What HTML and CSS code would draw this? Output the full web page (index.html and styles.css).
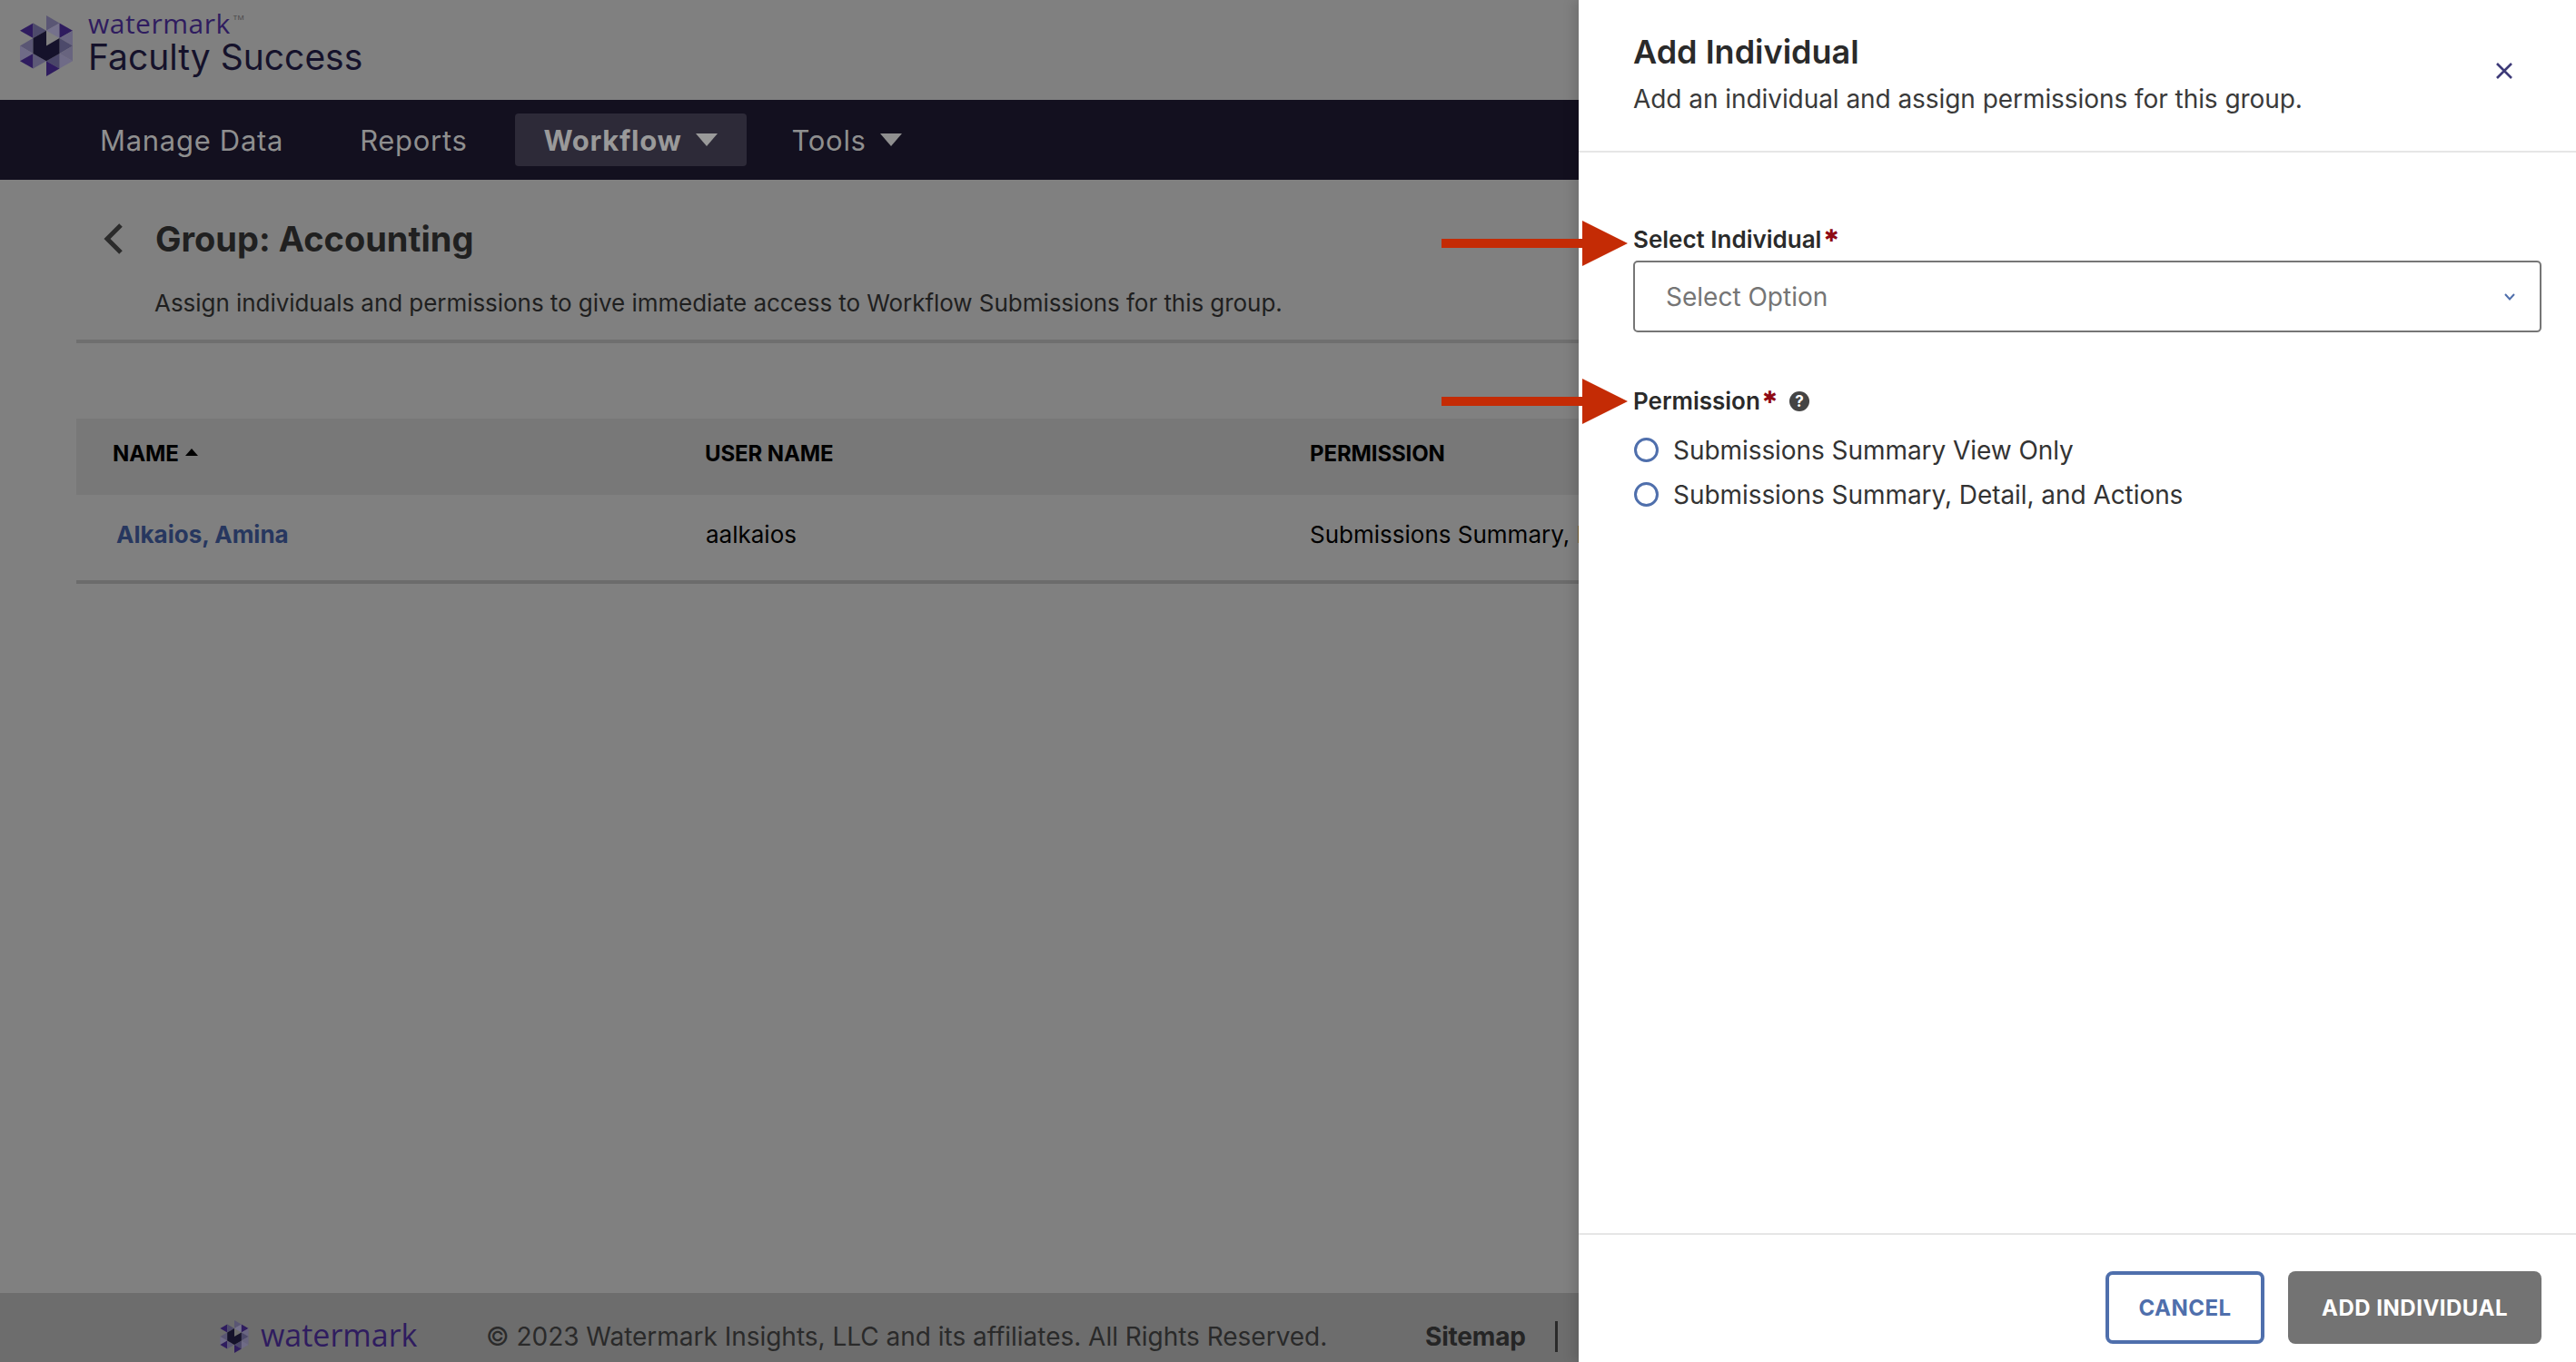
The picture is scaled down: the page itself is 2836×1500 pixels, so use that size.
FILE: index.html
```html
<!DOCTYPE html>
<html lang="en">
<head>
<meta charset="utf-8">
<title>Group: Accounting</title>
<link rel="stylesheet" href="styles.css">
</head>
<body>
<svg class="defs" width="0" height="0" aria-hidden="true">
  <symbol id="wm" viewBox="0 0 58 67">
    <polygon fill="#5a5674" points="29,0 43.5,8.4 29,16.75"/>
    <polygon fill="#75718c" points="29,16.75 43.5,8.4 43.5,25.1"/>
    <polygon fill="#2f1c5f" points="43.5,8.4 58,16.75 43.5,25.1"/>
    <polygon fill="#6a6682" points="58,16.75 43.5,25.1 58,33.5"/>
    <polygon fill="#4d4a6b" points="43.5,25.1 58,33.5 43.5,41.9"/>
    <polygon fill="#68647f" points="58,33.5 43.5,41.9 58,50.25"/>
    <polygon fill="#6f6b87" points="43.5,41.9 58,50.25 43.5,58.6"/>
    <polygon fill="#4a4668" points="29,50.25 43.5,41.9 43.5,58.6"/>
    <polygon fill="#2f1c5f" points="29,50.25 43.5,58.6 29,67"/>
    <polygon fill="#2f1c5f" points="0,16.75 14.5,8.4 14.5,25.1"/>
    <polygon fill="#4d4a6b" points="14.5,8.4 29,16.75 14.5,25.1"/>
    <polygon fill="#5a5674" points="0,33.5 14.5,25.1 14.5,41.9"/>
    <polygon fill="#6f6b87" points="0,33.5 14.5,41.9 0,50.25"/>
    <polygon fill="#2f1c5f" points="0,50.25 14.5,41.9 14.5,58.6"/>
    <polygon fill="#5d5977" points="14.5,41.9 29,50.25 14.5,58.6"/>
    <polygon fill="#15122b" points="14.5,25.1 29,16.75 29,33.5 43.5,25.1 43.5,41.9 29,50.25 14.5,41.9"/>
  </symbol>
</svg>

<div class="page">
  <header class="brand">
    <svg class="brand-mark"><use href="#wm"/></svg>
    <div class="brand-text">
      <div class="brand-wm">watermark<span class="tm">TM</span></div>
      <div class="brand-product">Faculty Success</div>
    </div>
  </header>

  <nav class="nav">
    <a class="nav-item">Manage Data</a>
    <a class="nav-item">Reports</a>
    <a class="nav-item active">Workflow<i class="caret"></i></a>
    <a class="nav-item">Tools<i class="caret"></i></a>
  </nav>

  <main class="main">
    <section class="title-block">
      <div class="title-row">
        <svg class="back" viewBox="0 0 22 34"><path d="M19 2 4 17l15 15" fill="none" stroke="#2b2b2b" stroke-width="5"/></svg>
        <h1>Group: Accounting</h1>
      </div>
      <p class="lead">Assign individuals and permissions to give immediate access to Workflow Submissions for this group.</p>
    </section>

    <div class="table">
      <div class="thead">
        <div class="th">NAME<i class="sort"></i></div>
        <div class="th">USER NAME</div>
        <div class="th">PERMISSION</div>
      </div>
      <div class="tr">
        <a class="td name">Alkaios, Amina</a>
        <div class="td user">aalkaios</div>
        <div class="td">Submissions Summary, Detail, and Actions</div>
      </div>
    </div>
  </main>

  <footer class="foot">
    <div class="foot-logo">
      <svg class="foot-mark"><use href="#wm"/></svg>
      <span class="foot-wm">watermark</span>
    </div>
    <span class="copy">© 2023 Watermark Insights, LLC and its affiliates. All Rights Reserved.</span>
    <a class="sitemap">Sitemap</a>
    <i class="foot-sep"></i>
  </footer>
</div>

<aside class="panel">
  <div class="panel-head">
    <div>
      <h2>Add Individual</h2>
      <p>Add an individual and assign permissions for this group.</p>
    </div>
    <svg class="close" viewBox="0 0 20 20"><path d="M2 2l16 16M18 2 2 18" fill="none" stroke="#3d3a78" stroke-width="2.6"/></svg>
  </div>

  <div class="panel-body">
    <label class="label">Select Individual<span class="req">✱</span></label>
    <div class="select">
      <span>Select Option</span>
      <svg class="chev" viewBox="0 0 14 10"><path d="M2 2l5 5.5L12 2" fill="none" stroke="#4f6fac" stroke-width="2"/></svg>
    </div>

    <div class="label perm">Permission<span class="req">✱</span>
      <svg class="help" viewBox="0 0 22 22"><circle cx="11" cy="11" r="11" fill="#444"/><text x="11" y="17" text-anchor="middle" class="help-q">?</text></svg>
    </div>
    <div class="radio"><i class="dot"></i>Submissions Summary View Only</div>
    <div class="radio"><i class="dot"></i>Submissions Summary, Detail, and Actions</div>
  </div>

  <div class="panel-foot">
    <button class="btn ghost">CANCEL</button>
    <button class="btn solid">ADD INDIVIDUAL</button>
  </div>
</aside>

<div class="arrow one"><i class="shaft"></i><i class="head"></i></div>
<div class="arrow two"><i class="shaft"></i><i class="head"></i></div>
</body>
</html>
```
FILE: styles.css
```css
* { box-sizing: border-box; }
html, body { margin: 0; height: 100%; }
body {
  position: relative;
  width: 2836px;
  height: 1500px;
  overflow: hidden;
  background: #808080;
  font-family: Inter, "Liberation Sans", sans-serif;
  color: #1a1a1a;
}
.defs { position: absolute; }
i { display: block; }

.page { display: flex; flex-direction: column; height: 1500px; }

.brand { height: 110px; display: flex; padding: 17px 0 0 22px; }
.brand-mark { width: 58px; height: 67px; }
.brand-text { margin-left: 17px; margin-top: -5px; }
.brand-wm { font: 500 30px/28px "Open Sans", sans-serif; color: #2f1c5f; letter-spacing: .5px; display: flex; }
.tm { font-size: 8px; line-height: 14px; margin-left: 3px; color: #444; }
.brand-product { font: 400 39px/42px Inter, sans-serif; color: #15122b; margin-top: 2px; }

.nav {
  height: 88px;
  background: #13101f;
  display: flex;
  align-items: center;
  padding-left: 78px;
  color: #8f8f8f;
  font-size: 31px;
  letter-spacing: .7px;
}
.nav-item { height: 58px; display: flex; align-items: center; padding: 0 32px; margin-right: 20px; border-radius: 4px; }
.nav-item.active { background: #2d2a38; font-weight: 700; color: #9a9a9a; margin-right: 18px; }
.caret { width: 0; height: 0; margin-left: 15px; border: 12px solid transparent; border-top: 14px solid currentColor; border-bottom: 0; }

.main { flex: 1; min-height: 0; padding: 0 0 0 84px; }
.title-block { height: 180px; border-bottom: 4px solid #6f6f6f; }
.title-row { display: flex; align-items: center; padding: 40px 0 0 30px; }
.back { width: 22px; height: 34px; }
h1 { margin: 0 0 0 35px; font-size: 38px; line-height: 50px; font-weight: 700; color: #202020; }
.lead { margin: 28px 0 0 86px; font-size: 26px; line-height: 36px; color: #1f1f1f; letter-spacing: -.05px; }

.table { margin-top: 83px; }
.thead, .tr { display: grid; grid-template-columns: 652px 666px 1fr; }
.thead { height: 84px; background: #787878; align-items: start; padding: 22px 0 0 40px; }
.th { font-size: 24px; line-height: 34px; font-weight: 700; color: #000; display: flex; align-items: center; letter-spacing: -.12px; }
.sort { width: 0; height: 0; margin-left: 7px; border: 7px solid transparent; border-bottom: 8px solid #000; border-top: 0; margin-bottom: 4px; }
.tr { height: 98px; align-items: center; padding: 0 0 8px 44px; border-bottom: 4px solid #6b6b6b; grid-template-columns: 649px 665px 1fr; }
.td { font-size: 26px; color: #000; white-space: nowrap; }
.name { font-weight: 700; color: #27375f; }

.foot {
  height: 76px;
  background: #6d6d6d;
  display: flex;
  align-items: center;
  padding: 20px 0 0 242px;
  color: #2a2a2a;
  font-size: 28px;
  flex-shrink: 0;
}
.foot-logo { display: flex; align-items: center; width: 293px; }
.foot-mark { width: 32px; height: 36px; }
.foot-wm { font: 500 34px/36px "Open Sans", sans-serif; color: #2f1c5f; margin: -5px 0 0 13px; }
.copy { width: 1034px; letter-spacing: -.02px; }
.sitemap { font-weight: 700; color: #252525; letter-spacing: -.2px; }
.foot-sep { width: 3px; height: 34px; background: #2a2a2a; margin-left: 32px; }

.panel {
  position: absolute;
  top: 0; right: 0; bottom: 0;
  width: 1098px;
  background: #fff;
  display: flex;
  flex-direction: column;
  box-shadow: -6px 0 12px rgba(0,0,0,.12);
}
.panel-head {
  height: 168px;
  border-bottom: 2px solid #e6e6e6;
  padding: 35px 60px 0 60px;
  display: flex;
  justify-content: space-between;
}
h2 { margin: 0; font-size: 36px; line-height: 44px; font-weight: 600; color: #2a2a2a; }
.panel-head p { margin: 12px 0 0; font-size: 28px; line-height: 36px; color: #3a3a3a; letter-spacing: -.06px; }
.close { width: 20px; height: 20px; margin-top: 33px; margin-right: 9px; }

.panel-body { flex: 1; padding: 78px 38px 0 60px; }
.label { display: flex; font-size: 26px; line-height: 36px; font-weight: 600; color: #2a2a2a; }
.req { color: #8f0a14; font: 400 19px/26px "DejaVu Sans", sans-serif; margin-left: 3px; }
.select {
  height: 79px;
  margin-top: 5px;
  border: 2px solid #767676;
  border-radius: 5px;
  display: flex;
  align-items: center;
  justify-content: space-between;
  padding: 0 26px 0 34px;
  font-size: 28px;
  color: #757575;
}
.chev { width: 14px; height: 10px; }
.perm { margin-top: 58px; align-items: center; }
.perm .req { align-self: flex-start; }
.help { width: 22px; height: 22px; margin-left: 13px; }
.help-q { font: 700 17px Inter, sans-serif; fill: #fff; }
.radio { display: flex; align-items: center; height: 49px; font-size: 28px; color: #333; letter-spacing: -.06px; }
.perm + .radio { margin-top: 11px; }
.dot { width: 27px; height: 27px; border: 3px solid #4f6fac; border-radius: 50%; margin-right: 16px; margin-left: 1px; flex: none; }

.panel-foot {
  height: 142px;
  border-top: 2px solid #e6e6e6;
  display: flex;
  justify-content: flex-end;
  gap: 26px;
  padding: 40px 38px 0 0;
}
.btn { height: 80px; border-radius: 8px; font: 700 24px Inter, sans-serif; letter-spacing: .5px; }
.ghost { width: 175px; background: #fff; border: 4px solid #4f6fac; color: #4f6fac; }
.solid { width: 279px; background: #737373; border: 0; color: #fff; }

.arrow { position: absolute; left: 1587px; width: 205px; height: 50px; display: flex; align-items: center; }
.arrow.one { top: 243px; }
.arrow.two { top: 417px; }
.shaft { width: 155px; height: 10px; background: #c42b05; }
.head { width: 0; height: 0; border-left: 50px solid #c42b05; border-top: 25px solid transparent; border-bottom: 25px solid transparent; }
```
